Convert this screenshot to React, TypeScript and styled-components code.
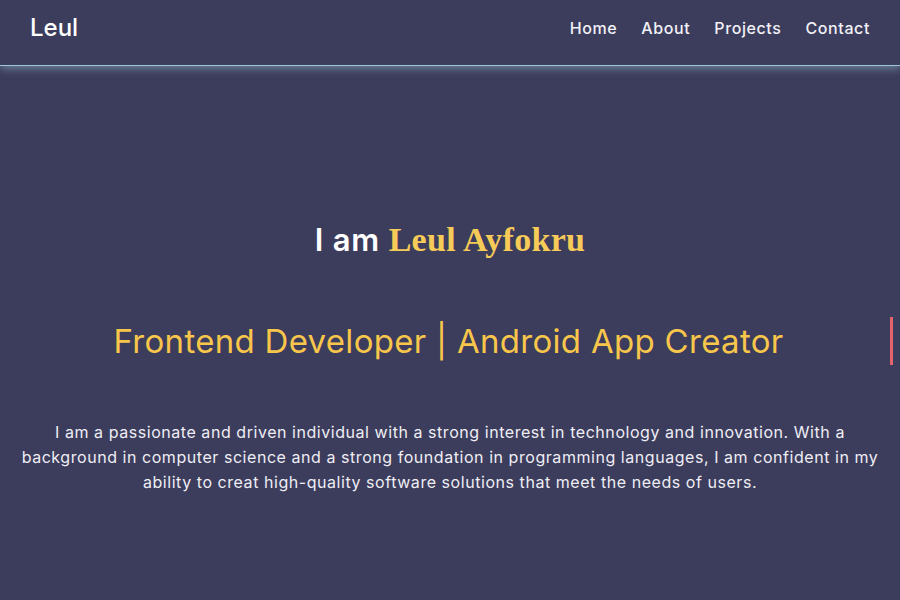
import styled, { createGlobalStyle } from "styled-components";

const GlobalStyle = createGlobalStyle`
  * {
    box-sizing: border-box;
  }
  body {
    margin: 0;
    background-color: #3c3c5c;
    font-family: Inter, "Noto Sans", sans-serif;
    color: #f1f1f6;
  }
`;

const Page = styled.div`
  min-height: 600px;
  background-color: #3c3c5c;
`;

const Header = styled.header`
  height: 66px;
  display: flex;
  justify-content: space-between;
  align-items: center;
  padding: 0 30px;
  border-bottom: 1px solid #9cc8d8;
  box-shadow: 0 3px 8px rgba(150, 190, 210, 0.5);
`;

const Logo = styled.div`
  font-size: 24px;
  font-weight: 500;
  color: #ffffff;
  margin-top: -10px;
`;

const Nav = styled.nav`
  display: flex;
  gap: 24px;
  margin-top: -10px;
`;

const NavLink = styled.a`
  font-size: 16px;
  font-weight: 500;
  letter-spacing: 0.6px;
  color: #f1f1f6;
  text-decoration: none;
  cursor: pointer;
`;

const Hero = styled.main`
  display: flex;
  flex-direction: column;
  align-items: center;
  padding-top: 155px;
  text-align: center;
`;

const Title = styled.h1`
  margin: 0;
  font-size: 31px;
  font-weight: 600;
  letter-spacing: 0.8px;
  color: #ffffff;
  span {
    font-family: "Liberation Serif", serif;
    font-size: 34px;
    font-weight: 700;
    letter-spacing: 0.3px;
    color: #f7cb57;
  }
`;

const Subtitle = styled.h2`
  align-self: stretch;
  margin: 58px 7px 0;
  padding: 4px 0;
  font-size: 33px;
  line-height: 40px;
  font-weight: 400;
  letter-spacing: 0.3px;
  color: #f7c64b;
  border-right: 3px solid #e5636d;
`;

const About = styled.p`
  margin: 55px 0 0;
  padding: 0 18px;
  font-size: 16px;
  line-height: 25px;
  letter-spacing: 0.55px;
  color: #eeeef4;
`;

export default function App() {
  return (
    <Page>
      <GlobalStyle />
      <Header>
        <Logo>Leul</Logo>
        <Nav>
          <NavLink>Home</NavLink>
          <NavLink>About</NavLink>
          <NavLink>Projects</NavLink>
          <NavLink>Contact</NavLink>
        </Nav>
      </Header>
      <Hero>
        <Title>
          I am <span>Leul Ayfokru</span>
        </Title>
        <Subtitle>Frontend Developer | Android App Creator</Subtitle>
        <About>
          I am a passionate and driven individual with a strong interest in
          technology and innovation. With a background in computer science and
          a strong foundation in programming languages, I am confident in my
          ability to creat high-quality software solutions that meet the needs
          of users.
        </About>
      </Hero>
    </Page>
  );
}
